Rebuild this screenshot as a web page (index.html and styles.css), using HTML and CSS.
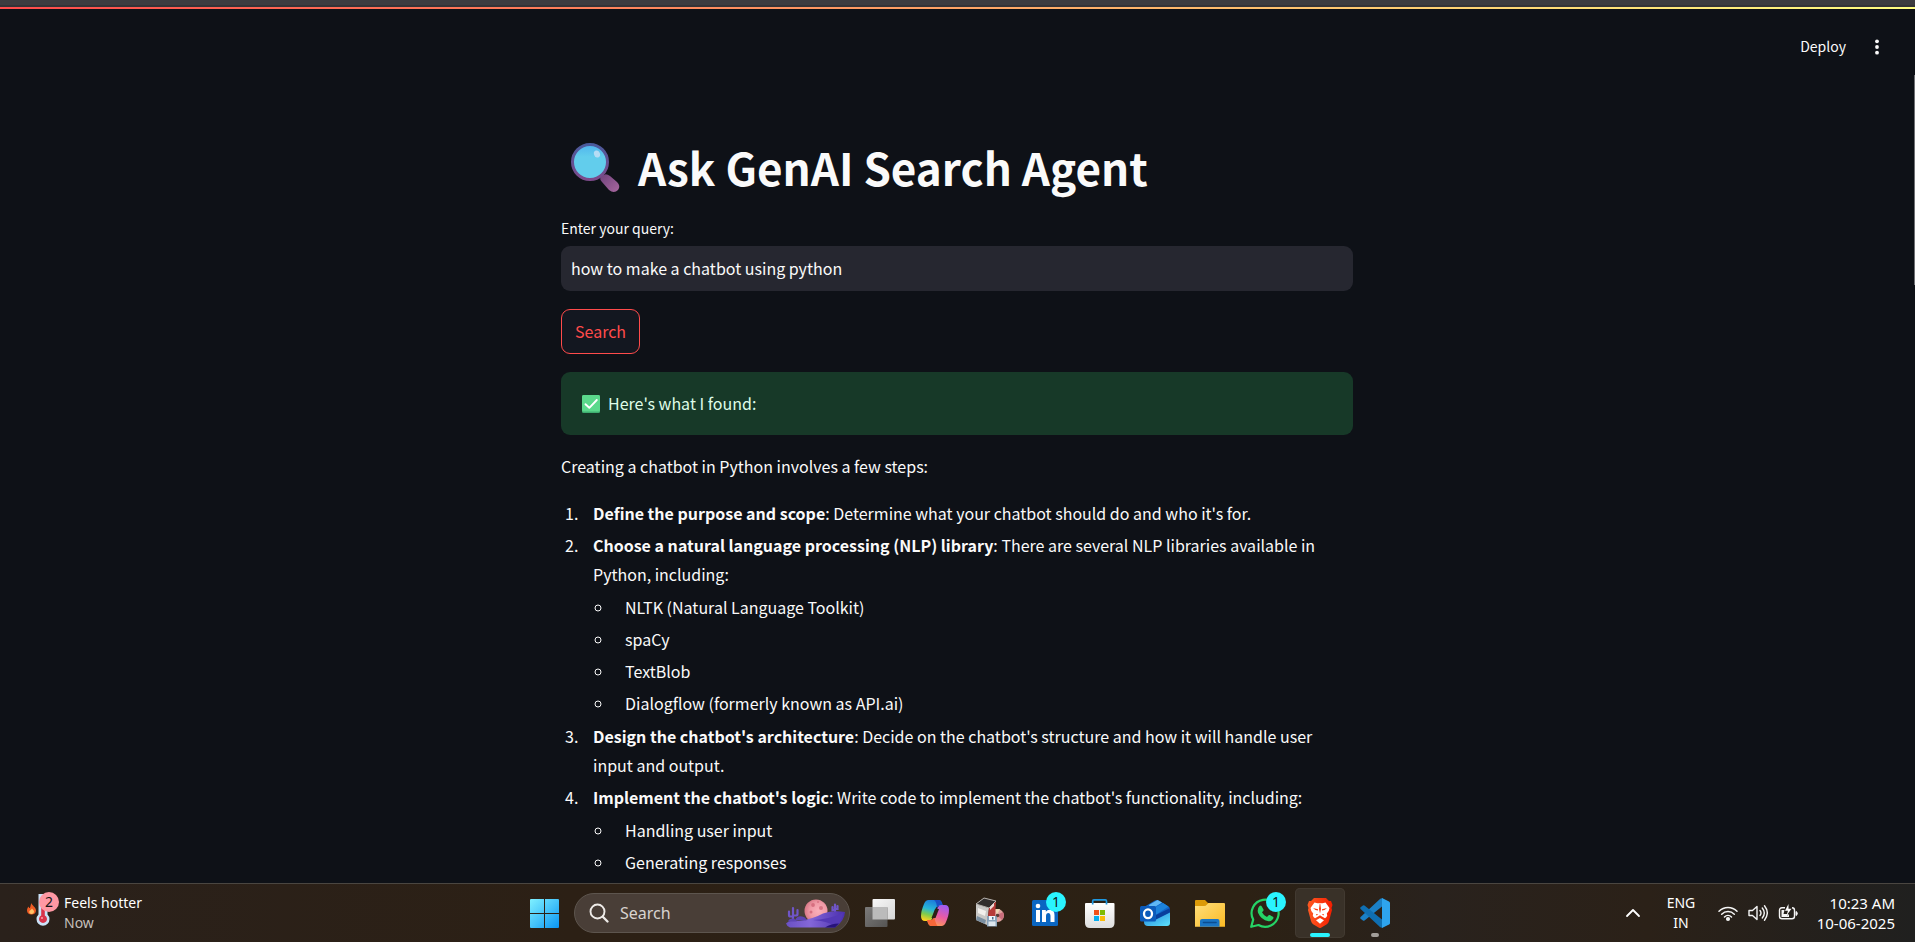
FILE: index.html
```html
<!DOCTYPE html>
<html lang="en">
<head>
<meta charset="utf-8">
<title>Ask GenAI Search Agent</title>
<link rel="stylesheet" href="styles.css">
</head>
<body>
<div class="browser-edge"></div>
<div class="decoration"></div>
<div class="app">
  <header class="toolbar">
    <button class="deploy" type="button">Deploy</button>
    <button class="menu" type="button" aria-label="Main menu">
      <svg width="20" height="20" viewBox="0 0 20 20" fill="#fafafa"><circle cx="10" cy="4.3" r="1.9"/><circle cx="10" cy="10" r="1.9"/><circle cx="10" cy="15.700" r="1.9"/></svg>
    </button>
  </header>
  <main class="content">
    <h1 class="title">
      <svg class="title-icon" width="60" height="56" viewBox="0 0 60 56" aria-hidden="true">
        <defs>
          <linearGradient id="rim" x1="0" y1="0" x2="0" y2="1"><stop offset="0" stop-color="#4a5a9c"/><stop offset="1" stop-color="#7c4a8a"/></linearGradient>
          <linearGradient id="glass" x1="0" y1="0" x2="0" y2="1"><stop offset="0" stop-color="#4fb4ee"/><stop offset=".35" stop-color="#62cdec"/><stop offset="1" stop-color="#62cdec"/></linearGradient>
          <linearGradient id="grip" x1="0" y1="0" x2="1" y2="1"><stop offset="0" stop-color="#6f437c"/><stop offset="1" stop-color="#a8679f"/></linearGradient>
        </defs>
        <path d="M40 38 Q44 33 49 37 L56 43 Q60 47 57 51 Q53 55 48 51 L41 43 Q38 40 40 38Z" fill="url(#grip)"/>
        <circle cx="29" cy="23" r="17.500" fill="url(#glass)" stroke="url(#rim)" stroke-width="3"/>
        <ellipse cx="36" cy="15" rx="3" ry="3.600" fill="#b5dcf4" transform="rotate(-20 36 15)"/>
      </svg>
      <span>Ask GenAI Search Agent</span>
    </h1>
    <form class="query">
      <label class="query-label" for="query">Enter your query:</label>
      <input class="query-input" id="query" type="text" value="how to make a chatbot using python">
      <button class="search-button" type="button">Search</button>
    </form>
    <div class="alert" role="status">
      <svg width="18" height="18" viewBox="0 0 18 18" aria-hidden="true"><rect width="18" height="18" rx="1.500" fill="#3fae70"/><rect width="18" height="16.500" rx="1.500" fill="#5bd98c"/><path d="M3.500 9.200 7.300 12.800 14.800 5" fill="none" stroke="#fff" stroke-width="1.900" stroke-linecap="round" stroke-linejoin="round"/></svg>
      <span>Here's what I found:</span>
    </div>
    <div class="answer">
      <p>Creating a chatbot in Python involves a few steps:</p>
      <ol>
        <li><strong>Define the purpose and scope</strong>: Determine what your chatbot should do and who it's for.</li>
        <li><strong>Choose a natural language processing (NLP) library</strong>: There are several NLP libraries available in Python, including:
          <ul>
            <li>NLTK (Natural Language Toolkit)</li>
            <li>spaCy</li>
            <li>TextBlob</li>
            <li>Dialogflow (formerly known as API.ai)</li>
          </ul>
        </li>
        <li><strong>Design the chatbot's architecture</strong>: Decide on the chatbot's structure and how it will handle user input and output.</li>
        <li><strong>Implement the chatbot's logic</strong>: Write code to implement the chatbot's functionality, including:
          <ul>
            <li>Handling user input</li>
            <li>Generating responses</li>
          </ul>
        </li>
      </ol>
    </div>
  </main>
  <div class="scroll-thumb"></div>
</div>
<footer class="taskbar">
  <button class="weather" type="button">
    <span class="weather-icon">
      <svg width="44" height="50" viewBox="0 0 44 50" aria-hidden="true">
        <path d="M11.500 15c.3 2.500 4.500 4 4.500 7.500 0 2.500-2 4-4.500 4S7 25 7 22.500c0-2 .8-3 1.500-4 .3 1 .8 1.500 1.300 1.500 1-1.500.7-3.500 1.700-5Z" fill="#ee5b24"/><path d="M12 20.500c1 1.300 2.300 2 2 3.500-.3 1.300-1.200 2-2.400 2s-2.400-.8-2.400-2c0-1.400 2-1.800 2.800-3.500Z" fill="#ffc267"/>
        <path d="M18.500 6h9v20.500a6.500 6.500 0 1 1-9 0Z" fill="#c9e2f8"/><path d="M21.200 12h3.600v15.500a4 4 0 1 1-3.600 0Z" fill="#d8324a"/><circle cx="22" cy="30" r="1" fill="#ff9caa"/>
      </svg>
      <span class="badge badge-pink">2</span>
    </span>
    <span class="stack"><span>Feels hotter</span><span class="muted">Now</span></span>
  </button>
  <nav class="apps" aria-label="Taskbar">
    <button class="tile" type="button" aria-label="Start">
      <svg width="50" height="50" viewBox="0 0 50 50"><defs><linearGradient id="win" gradientUnits="userSpaceOnUse" x1="11" y1="11" x2="40" y2="40"><stop offset="0" stop-color="#7ff0ff"/><stop offset=".5" stop-color="#46c4fa"/><stop offset="1" stop-color="#0a94f2"/></linearGradient></defs><path fill="url(#win)" d="M12 11H25V25H11V12Q11 11 12 11ZM26 11H39Q40 11 40 12V25H26ZM11 26H25V40H12Q11 40 11 39ZM26 26H40V39Q40 40 39 40H26Z"/></svg>
    </button>
    <div class="taskbar-search">
      <svg width="20" height="20" viewBox="0 0 20 20" aria-hidden="true" fill="none" stroke="#eeebe8" stroke-linecap="round"><circle cx="8.500" cy="8.500" r="7" stroke-width="1.900"/><path d="m13.800 13.800 4.700 4.700" stroke-width="2.300"/></svg>
      <input class="taskbar-input" type="text" placeholder="Search" aria-label="Search">
      <svg width="60" height="30" viewBox="0 0 60 30" aria-hidden="true">
        <defs>
          <linearGradient id="dune" x1="0" y1="0" x2="1" y2="0"><stop offset="0" stop-color="#6a50c4"/><stop offset=".4" stop-color="#8467d8"/><stop offset="1" stop-color="#4a2fae"/></linearGradient>
          <radialGradient id="moon" cx=".6" cy=".5" r=".6"><stop offset="0" stop-color="#fbb0ba"/><stop offset=".6" stop-color="#f09aa6"/><stop offset="1" stop-color="#d87886"/></radialGradient>
        </defs>
        <circle cx="31" cy="13" r="11.500" fill="url(#moon)"/><circle cx="28" cy="7" r="1.900" fill="#d66f80"/><circle cx="36" cy="10" r="2" fill="#d97483"/><circle cx="26" cy="14" r="1.500" fill="#d66f80"/><circle cx="33" cy="4" r="1" fill="#da7484"/>
        <path d="M8 25V10M8 18.500H5.500Q4 18.500 4 17v-3.500M8 17.500h3q1.500 0 1.500-1.500v-4M50 15V6.500M50 12h-2.500V9M50 11h2.500V8" fill="none" stroke="#6f55c8" stroke-width="2.200" stroke-linecap="round"/>
        <path d="M42 16Q46 11.500 52 15Z" fill="#7259c8"/>
        <path d="M1 25.500Q5 21.500 14 23Q28 21 38 15.500Q48 12 60 14Q59.500 23 50 29.500H5Q2 28.500 1 25.500Z" fill="url(#dune)"/>
        <path d="M28 22Q42 22 58 15Q58 22 50 28Q42 23 28 22Z" fill="#5439b6"/><path d="M40 29.500Q46 25.500 54 25.500L50 29.500Z" fill="#27137b"/>
        <path d="M10 22.500Q12 17.500 17 18.500Q21 19 21.500 22.500ZM3 23.500Q4 20 9 20.500L12 23.500Z" fill="#5d45b4"/>
      </svg>
    </div>
    <button class="tile" type="button" aria-label="Task view">
      <svg width="50" height="50" viewBox="0 0 50 50"><defs><linearGradient id="tvf" x1="0" y1="0" x2="1" y2="1"><stop offset="0" stop-color="#f8f8f8"/><stop offset="1" stop-color="#d6d6d6"/></linearGradient><linearGradient id="tvb" x1="0" y1="0" x2="1" y2="1"><stop offset="0" stop-color="#7c7b7a"/><stop offset="1" stop-color="#555453"/></linearGradient></defs><rect x="17.500" y="11" width="22.500" height="20.500" rx="1" fill="url(#tvf)"/><rect x="10" y="19" width="22.500" height="20" rx="1" fill="url(#tvb)"/><path d="M17.500 19h15v12.500h-15Z" fill="#bbb"/></svg>
    </button>
    <button class="tile" type="button" aria-label="Copilot">
      <svg width="50" height="50" viewBox="0 0 50 50"><defs><linearGradient id="cpa" x1=".6" y1="0" x2=".3" y2="1"><stop offset="0" stop-color="#1b78dc"/><stop offset=".45" stop-color="#28b6d8"/><stop offset=".72" stop-color="#7fcb4c"/><stop offset="1" stop-color="#ffd21f"/></linearGradient><linearGradient id="cpb" x1=".7" y1="0" x2=".3" y2="1"><stop offset="0" stop-color="#a15cf0"/><stop offset=".5" stop-color="#e95ba5"/><stop offset="1" stop-color="#ffa04d"/></linearGradient></defs>
      <path d="M18.500 12H28.500Q31 12 32 15L33 18H29Q26 18 25 22L22 31Q21 33 18.500 33H15Q11 33 11 28Q11 23 14 16Q15.500 12 18.500 12Z" fill="url(#cpa)"/><path d="M31.500 38H21.500Q19 38 18 35L17 32H21Q24 32 25 28L28 19Q29 17 31.500 17H35Q39 17 39 22Q39 27 36 34Q34.500 38 31.500 38Z" fill="url(#cpb)"/><path d="M24 12h5q2.500 0 3.500 5h-2q-2.500 0-3.500 4Q27 14 24 12Z" fill="#1a4fc4"/><path d="M17 32h4q2.500 0 3.500-5 0 7 3 11h-6q-2.500 0-3.500-3Z" fill="#f76739"/><path d="M25 21h4l-3.500 9H21.500Z" fill="#2b2016"/></svg>
    </button>
    <button class="tile" type="button" aria-label="Installer">
      <svg width="50" height="50" viewBox="0 0 50 50"><circle cx="32.500" cy="27.500" r="6.500" fill="#dfa39f"/><path d="m32 27 6-3q2 4-1 8Z" fill="#c96d7c"/><path d="m32 27-2-6h5Z" fill="#efd5b4"/><circle cx="32.500" cy="27.500" r="1.800" fill="#5b3b35"/><path d="m11 16 13 4-2 17-11-5Z" fill="#c9c8c6"/><path d="m24 20 7-7-1 16-8 8Z" fill="#b73b38"/><path d="m11 16 8-6 12 3-7 7Z" fill="#302d2c" stroke="#b9b5b1"/><path d="m13 20 8 3-1 5-7-3Z" fill="#f2efec"/><path d="m12 28 9 4-1 4-9-4Z" fill="#7b8fa1"/><path d="m25 19 4-4v3l-4 4Z" fill="#f0d9d5"/><path d="M22 28h9l1 1v9.500H22Z" fill="#8aa4bb"/><path d="M24 28h6v4h-6Z" fill="#eef4f8"/><path d="M23.500 33.500h7V38h-7Z" fill="#dce6ee"/><path d="M27 29h1.500v2.500H27Z" fill="#4e6c88"/></svg>
    </button>
    <button class="tile" type="button" aria-label="LinkedIn">
      <svg width="50" height="50" viewBox="0 0 50 50"><rect x="12" y="12" width="26" height="26" rx="1.500" fill="#0a66c2"/><circle cx="18" cy="18" r="2.300" fill="#fff"/><path d="M16 22h4v12h-4ZM22 22h3.800v1.700q1.300-2 4-2 4.700 0 4.700 5.300v7h-4v-6.300q0-2.700-2-2.700-2.500 0-2.500 3v6h-4Z" fill="#fff"/></svg>
      <span class="badge badge-cyan">1</span>
    </button>
    <button class="tile" type="button" aria-label="Microsoft Store">
      <svg width="50" height="50" viewBox="0 0 50 50"><defs><linearGradient id="bag" x1="0" y1="0" x2="0" y2="1"><stop offset="0" stop-color="#fff"/><stop offset="1" stop-color="#dedede"/></linearGradient></defs><path d="M11 15H38.500Q39.500 15 39.500 16V35Q39.500 40 34.500 40H15Q10 40 10 35V16Q10 15 11 15Z" fill="url(#bag)"/><path d="M17.700 16.500V13q0-1.200 1.200-1.200H30.300q1.200 0 1.200 1.200v3.500" fill="none" stroke="#1f98e0" stroke-width="1.700"/><path d="M19 22h5v5h-5Z" fill="#f1511b"/><path d="M25 22h5v5h-5Z" fill="#80bb02"/><path d="M19 28h5v5h-5Z" fill="#06adef"/><path d="M25 28h5v5h-5Z" fill="#fbbc0a"/></svg>
    </button>
    <button class="tile" type="button" aria-label="Outlook">
      <svg width="50" height="50" viewBox="0 0 50 50"><defs><linearGradient id="env" x1="0" y1="0" x2="1" y2="1"><stop offset="0" stop-color="#1f83dd"/><stop offset="1" stop-color="#5fe3fb"/></linearGradient></defs><path d="M14 19 25 12.500Q27 11.500 29 12.500L38.500 18.500Q40 19.500 40 21.500V30L14 32Z" fill="#1166c8"/><path d="M19 17 27.500 12 32 14.500 20 22Z" fill="#5fb7f5"/><path d="m20 22 13-7 5.500 3.500L24 28Z" fill="#1c82dc"/><path d="m24 28 16-8v5L27 33Z" fill="#083f9d"/><path d="M14 29 26 31.500 40 24.500V35q0 3-3 3H18q-4 0-4-4Z" fill="url(#env)"/><rect x="10" y="18" width="16" height="15.500" rx="1.500" fill="#0c5bbb"/><ellipse cx="18" cy="25.800" rx="4" ry="4.400" fill="none" stroke="#fff" stroke-width="2.300"/></svg>
    </button>
    <button class="tile" type="button" aria-label="File Explorer">
      <svg width="50" height="50" viewBox="0 0 50 50"><defs><linearGradient id="fold" x1="0" y1="0" x2="1" y2="1"><stop offset="0" stop-color="#ffdf7c"/><stop offset="1" stop-color="#fbba23"/></linearGradient></defs><path d="M11 12H20L23 15H30V20H10V13Q10 12 11 12Z" fill="#dc9a08"/><path d="M10 18H19Q21 18 22 16.500L23.500 15H39Q40 15 40 16V38.700H10Z" fill="url(#fold)"/><path d="M15 38.700V33q0-2 2-2H32.500q2 0 2 2v5.700Z" fill="#1a75c4"/><path d="M18.500 34.500h12.500" stroke="#0b4d91" stroke-width="1.600" stroke-linecap="round"/></svg>
    </button>
    <button class="tile" type="button" aria-label="WhatsApp">
      <svg width="50" height="50" viewBox="0 0 50 50"><path d="m11.200 38.800 2-7.200A13.500 13.500 0 1 1 18.500 37Z" fill="none" stroke="#25d366" stroke-width="2.200" stroke-linejoin="round"/><path d="M19.500 18q1-1 2 0l2 3.500q.3.800-.3 1.500l-1.200 1.300q1.700 3.400 5 4.700l1.300-1.500q.6-.7 1.500-.4l3.200 1.700q.8.500.3 1.800-1.500 3-4.800 2.600-7.500-1.400-10.500-8.500-1-4 1.500-6.700Z" fill="#25d366"/></svg>
      <span class="badge badge-cyan">1</span>
    </button>
    <button class="tile tile-active" type="button" aria-label="Brave">
      <svg width="50" height="50" viewBox="0 0 50 50"><defs><linearGradient id="brv" x1="0" y1="0" x2="1" y2="0"><stop offset="0" stop-color="#ff5a22"/><stop offset="1" stop-color="#f41d00"/></linearGradient></defs><path d="M19 10H31L34 13 36 13 37.500 17 36.500 20 37 22 34 33Q33.500 35 31.500 36.500L26 39.700Q25 40.200 24 39.700L18.500 36.500Q16.500 35 16 33L13 22 13.500 20 12.500 17 14 13 16 13Z" fill="url(#brv)"/><path d="M19.500 14.500 22.500 15.300H27.500L30.500 14.500 34.500 20Q34.300 23 31.800 25.500 32.800 27.500 31.500 29L30 30.300 26.500 28.300 25 27.300 23.500 28.300 20 30.300 18.500 29Q17.200 27.500 18.200 25.500 15.700 23 15.500 20Z" fill="#fff"/><path d="M25 30 29 32.300 25 35.700 21 32.300Z" fill="#fff"/><path d="m18 20 5 1.200v1.300L20.500 22ZM32 20l-5 1.200v1.300l2.500-.5ZM24.700 16h.6l.7 5-1 4.500L24 21ZM21 26l2.300.6-1.800.8ZM29 26l-2.300.6 1.800.8Z" fill="#fb3a10"/></svg>
      <span class="running running-active"></span>
    </button>
    <button class="tile" type="button" aria-label="Visual Studio Code">
      <svg width="50" height="50" viewBox="0 0 50 50"><path d="M32 18.500 14.500 32.500q-.8.600-1.600 0L10.600 30.700q-1-.8 0-1.800L30 11Q31 10 32.500 10.200Z" fill="#1b80c6"/><path d="M32 31.500 14.500 17.500q-.8-.6-1.600 0L10.600 19.300q-1 .8 0 1.800L30 39Q31 40 32.500 39.800Z" fill="#0f6fb2"/><path d="M32 10 39 13.500q1 .5 1 1.600V34.900q0 1.100-1 1.600L32 40Z" fill="#2ea4ee"/></svg>
      <span class="running"></span>
    </button>
  </nav>
  <div class="tray">
    <button class="tray-button" type="button" aria-label="Show hidden icons"><svg width="16" height="10" viewBox="0 0 16 10" fill="none" stroke="#fff" stroke-width="1.800" stroke-linecap="round" stroke-linejoin="round"><path d="m2 8 6-6 6 6"/></svg></button>
    <button class="tray-button language stack" type="button"><span>ENG</span><span>IN</span></button>
    <button class="tray-button system" type="button" aria-label="Network, volume and battery">
      <svg width="20" height="20" viewBox="0 0 20 20" fill="none" stroke="#f5f5f5" stroke-width="1.500" stroke-linecap="round"><path d="M1 8.300a12.700 12.700 0 0 1 18 0M3.700 11.200a8.900 8.900 0 0 1 12.600 0M6.500 14a5 5 0 0 1 7 0"/><circle cx="10" cy="16" r="1.300" fill="#f5f5f5"/></svg>
      <svg width="20" height="20" viewBox="0 0 20 20" fill="none" stroke="#f5f5f5" stroke-width="1.400" stroke-linecap="round" stroke-linejoin="round"><path d="M1 7.500h3.500L9 3.500v13L4.500 12.500H1ZM12 7.500q2 2.500 0 5M14.300 5q4 5 0 10M16.500 2.800q5.600 7.200 0 14.400"/></svg>
      <svg width="20" height="20" viewBox="0 0 20 20"><path d="M7 4.800H4Q1.500 4.800 1.500 7.300v6Q1.500 15.800 4 15.800H14Q16.500 15.800 16.500 13.300V7.300Q16.500 4.800 14 4.800" fill="none" stroke="#f5f5f5" stroke-width="1.400"/><path d="M18 8.500q1.300.5 1.300 2t-1.300 2Z" fill="#f5f5f5" stroke="#f5f5f5"/><path d="M3.500 7h3l-1 4h4.500L9 14H3.500Z" fill="#f5f5f5"/><path d="M10.500 1 7 7.700h3L8.500 12.500 13.500 5.800h-3Z" fill="#fff"/><path d="M11 11v3H8Z" fill="#f5f5f5"/></svg>
    </button>
    <button class="tray-button clock stack" type="button"><span>10:23 AM</span><span>10-06-2025</span></button>
  </div>
</footer>
</body>
</html>
```
FILE: styles.css
```css
* { box-sizing: border-box; }

body {
  margin: 0;
  height: 100vh;
  display: flex;
  flex-direction: column;
  overflow: hidden;
  background: #0e1117;
  color: #fafafa;
  font-family: "Noto Sans CJK SC", "Noto Sans", sans-serif;
  font-size: 16px;
  line-height: 29px;
}

button, input {
  font: inherit;
  color: inherit;
  border: 0;
  padding: 0;
  margin: 0;
  background: none;
}

svg { display: block; flex: none; }

.browser-edge { flex: none; height: 7px; background: linear-gradient(#3d3c40 70%, #343337 70%); }
.decoration { flex: none; height: 2px; background: linear-gradient(90deg, #ff4b4b, #fffd80); }

.app {
  position: relative;
  flex: 1;
  min-height: 0;
  padding-right: 1px;
  overflow: hidden;
}

.toolbar {
  display: flex;
  justify-content: flex-end;
  align-items: center;
  gap: 21px;
  height: 66px;
  padding: 9px 27px 0 0;
}
.deploy { font-size: 14px; }

.scroll-thumb {
  position: absolute;
  top: 66px;
  right: 0;
  width: 1px;
  height: 210px;
  background: #6f7074;
}

.content {
  width: 100%;
  max-width: 792px;
  margin: 0 auto;
  padding-top: 62px;
}

.title {
  display: flex;
  align-items: center;
  gap: 17px;
  margin: 0 0 19px;
  font-size: 44px;
  font-weight: 700;
  line-height: 60px;
}

.query {
  display: flex;
  flex-direction: column;
  align-items: flex-start;
}
.query-label { font-size: 14px; line-height: 24px; margin-bottom: 6px; }
.query-input {
  width: 100%;
  height: 45px;
  padding: 0 10px 2px;
  border-radius: 9px;
  background: #262730;
}
.search-button {
  height: 45px;
  margin: 18px 0;
  padding: 0 13px 1px;
  border: 1px solid #ff4b4b;
  border-radius: 9px;
  background: #131720;
  color: #ff4b4b;
}

.alert {
  display: flex;
  align-items: center;
  gap: 8px;
  padding: 17px 21px;
  border-radius: 9px;
  background: #173928;
  color: #dffde9;
}

.answer p { margin: 17px 0 18px; }
.answer ol, .answer ul { margin: 0; padding: 0; }
.answer ol { margin-top: 18px; }
.answer ul { margin: 4px 0; list-style: circle; }
.answer li { margin: 3px 0 3px 21px; padding-left: 11px; }

.taskbar {
  position: relative;
  flex: none;
  display: grid;
  grid-template-columns: 1fr auto 1fr;
  align-items: center;
  height: 59px;
  padding: 0 20px;
  border-top: 1px solid #4a4641;
  background: linear-gradient(90deg, #2a211b, #2c2015 30%, #2c2114 65%, #29221d 75%, #2b2118 86%, #20201f);
  font-family: "Noto Sans", "Open Sans", sans-serif;
  font-size: 14px;
  line-height: 20px;
  color: #fff;
}

.stack { display: flex; flex-direction: column; }
.muted { color: #c4bfbb; }

.weather {
  display: flex;
  align-items: center;
  justify-self: start;
  text-align: left;
}
.weather-icon { position: relative; width: 44px; }

.badge {
  position: absolute;
  top: 4px;
  width: 20px;
  height: 20px;
  border-radius: 50%;
  color: #151515;
  text-align: center;
}
.badge-pink { left: 19px; background: #ff98a3; }
.badge-cyan { left: 26px; background: #2af4ff; }

.apps { display: flex; align-items: center; gap: 5px; padding-left: 4px; }
.tile { position: relative; width: 50px; height: 50px; }
.tile-active { border-radius: 5px; background: #393128; box-shadow: inset 0 0 0 1px #423a31; }

.running {
  position: absolute;
  left: 21px;
  bottom: 1px;
  width: 8px;
  height: 4px;
  border-radius: 2px;
  background: #a39e99;
}
.running-active { left: 15px; width: 20px; background: #2af4ff; }

.taskbar-search {
  display: flex;
  align-items: center;
  width: 276px;
  height: 40px;
  padding: 0 4px 0 14px;
  border: 1px solid #5d554e;
  border-radius: 20px;
  background: #493e37;
}
.taskbar-input { flex: 1; min-width: 0; padding-left: 11px; font-size: 16px; }
.taskbar-input::placeholder { color: #d8d3cf; opacity: 1; }

.tray { display: flex; align-items: center; justify-self: end; }
.tray-button { min-height: 40px; }
.language { align-items: center; width: 50px; margin: 0 12px 0 15px; }
.system { display: flex; align-items: center; gap: 10px; }
.clock { align-items: flex-end; width: 97px; font-size: 15px; }
```
